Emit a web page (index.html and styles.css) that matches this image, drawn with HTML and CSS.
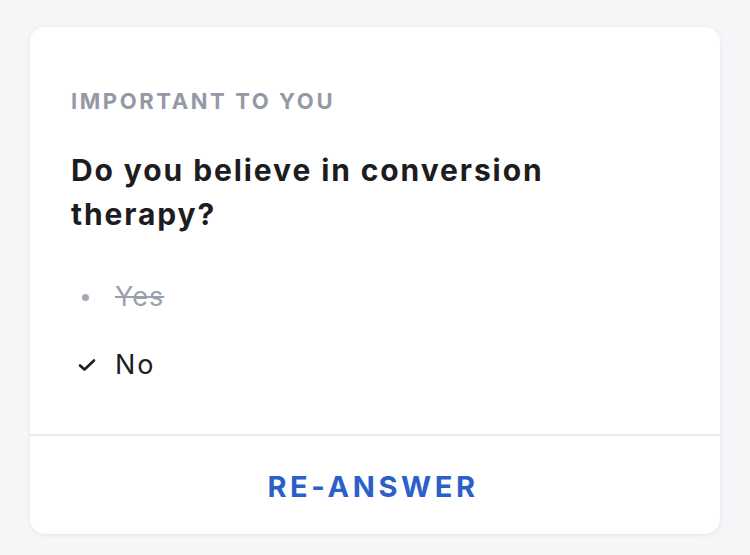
FILE: index.html
```html
<!DOCTYPE html>
<html lang="en">
<head>
<meta charset="utf-8">
<title>Important to you</title>
<link rel="stylesheet" href="styles.css">
</head>
<body>
<div class="card">
  <div class="card-body">
    <div class="label">IMPORTANT TO YOU</div>
    <h2 class="question">Do you believe in conversion therapy?</h2>
    <ul class="answers">
      <li class="answer answer-other">
        <span class="marker"><span class="dot"></span></span>
        <span class="answer-text">Yes</span>
      </li>
      <li class="answer answer-chosen">
        <span class="marker">
          <svg class="check" width="18" height="14" viewBox="0 0 18 14"><path d="M2 7.5 L6.5 11.5 L16 2.5" fill="none" stroke="#1d1d1f" stroke-width="2.6" stroke-linecap="round" stroke-linejoin="round"/></svg>
        </span>
        <span class="answer-text">No</span>
      </li>
    </ul>
  </div>
  <div class="card-footer">
    <button class="reanswer">RE-ANSWER</button>
  </div>
</div>
</body>
</html>
```
FILE: styles.css
```css
html, body {
  margin: 0;
  padding: 0;
}
body {
  background: #f5f6f8;
  font-family: "Inter", "Liberation Sans", sans-serif;
  padding: 27px 30px 0 30px;
  height: 555px;
  box-sizing: border-box;
}
.card {
  background: #ffffff;
  border-radius: 15px;
  box-shadow: 0 1px 5px rgba(30, 35, 60, 0.07);
  width: 690px;
  overflow: hidden;
}
.card-body {
  padding: 60px 41px 51px 41px;
}
.label {
  font-size: 22px;
  line-height: 28px;
  font-weight: 700;
  letter-spacing: 2.6px;
  color: #9399a6;
}
.question {
  margin: 33px 0 0 0;
  font-size: 30px;
  line-height: 44px;
  font-weight: 700;
  letter-spacing: 1.9px;
  color: #1d1d1f;
  width: 520px;
}
.answers {
  list-style: none;
  margin: 43px 0 0 0;
  padding: 0;
  display: flex;
  flex-direction: column;
  gap: 32px;
}
.answer {
  display: flex;
  align-items: center;
  font-size: 27px;
  line-height: 36px;
}
.marker {
  width: 44px;
  display: flex;
  align-items: center;
}
.dot {
  width: 7px;
  height: 7px;
  border-radius: 50%;
  background: #a3a9b5;
  margin-left: 11px;
}
.check {
  margin-left: 7px;
}
.answer-text {
  letter-spacing: 1px;
}
.answer-other .answer-text {
  color: #9aa0ac;
  text-decoration: line-through;
  text-decoration-thickness: 2px;
}
.answer-chosen .answer-text {
  color: #1d1d1f;
  letter-spacing: 2px;
}
.card-footer {
  border-top: 2px solid #e9eaef;
  height: 98px;
  display: flex;
  align-items: center;
  justify-content: center;
}
.reanswer {
  background: none;
  border: none;
  padding: 0 4px 0 0;
  font-family: "Inter", "Liberation Sans", sans-serif;
  font-size: 29px;
  line-height: 36px;
  font-weight: 700;
  letter-spacing: 3.6px;
  color: #2d5fc9;
  cursor: pointer;
  margin-top: 3px;
}
```
